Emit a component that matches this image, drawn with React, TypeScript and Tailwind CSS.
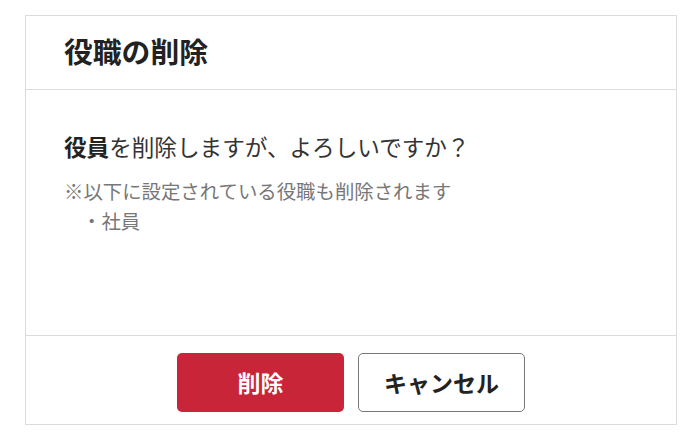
export default function App() {
  return (
    <div
      className="w-full h-[437px] bg-white pt-[15px] pl-[25px]"
      style={{ fontFamily: '"Noto Sans CJK JP", "Noto Sans", sans-serif' }}
    >
      <div className="w-[652px] border border-[#dcdcdc] bg-white">
        {/* header */}
        <div className="h-[74px] border-b border-[#dcdcdc] flex items-center pl-[38px] pb-[2px]">
          <h2 className="text-[28.8px] font-bold text-[#222] leading-none">役職の削除</h2>
        </div>

        {/* body */}
        <div className="h-[245px] pt-[40px] pl-[38px]">
          <p className="text-[22.6px] leading-[33px] text-[#333]">
            <span className="font-bold text-[#222]">役員</span>を削除しますが、よろしいですか？
          </p>
          <div className="mt-[13px] text-[19.4px] leading-[30px] text-[#777]">
            <p>※以下に設定されている役職も削除されます</p>
            <ul className="pl-[18px]">
              <li>・社員</li>
            </ul>
          </div>
        </div>

        {/* footer */}
        <div className="h-[89px] border-t border-[#dcdcdc] flex items-center justify-center gap-[14px] pt-[4px]">
          <button className="w-[167px] h-[59px] rounded-[5px] bg-[#c82539] text-white text-[23px] font-bold">
            削除
          </button>
          <button className="w-[167px] h-[59px] rounded-[5px] border border-[#777] bg-white text-[#222] text-[23px] font-bold">
            キャンセル
          </button>
        </div>
      </div>
    </div>
  );
}
